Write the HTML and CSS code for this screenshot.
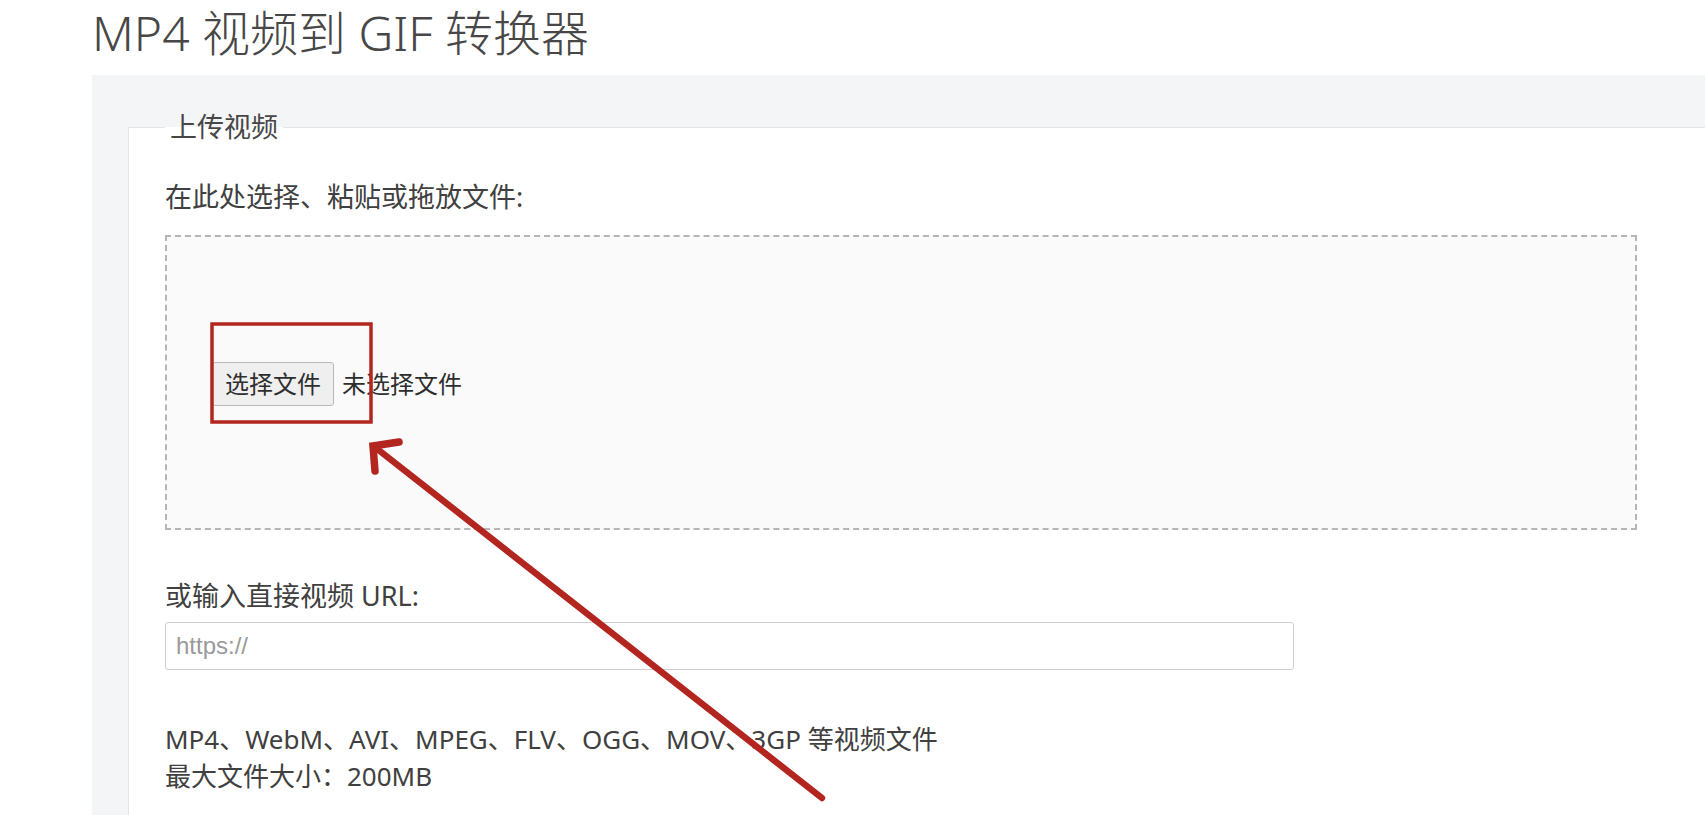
FILE: index.html
```html
<!DOCTYPE html>
<html lang="zh-CN">
<head>
<meta charset="utf-8">
<title>MP4 视频到 GIF 转换器</title>
<link rel="stylesheet" href="styles.css">
</head>
<body>
<div class="page">
  <h1 class="title">MP4 视频到 GIF 转换器</h1>
  <div class="panel">
    <fieldset class="upload">
      <legend class="upload-legend">上传视频</legend>
      <div class="field-label first">在此处选择、粘贴或拖放文件:</div>
      <div class="dropzone">
        <div class="file-input">
          <span class="file-btn">选择文件</span>
          <span class="file-name">未选择文件</span>
        </div>
      </div>
      <div class="field-label url-label">或输入直接视频 URL:</div>
      <div class="url-input"><span class="placeholder">https://</span></div>
      <div class="info">
        <div>MP4、WebM、AVI、MPEG、FLV、OGG、MOV、3GP 等视频文件</div>
        <div>最大文件大小：200MB</div>
      </div>
    </fieldset>
  </div>
</div>
<svg class="annotation" width="1705" height="815" viewBox="0 0 1705 815">
  <rect x="212" y="324" width="159" height="98" fill="none" stroke="#b3261f" stroke-width="3.5"/>
  <line x1="822" y1="798" x2="376" y2="448" stroke="#b3261f" stroke-width="6.5" stroke-linecap="round"/>
  <polyline points="399,442 373,446 375,471" fill="none" stroke="#b3261f" stroke-width="7.5" stroke-linecap="round" stroke-linejoin="miter"/>
</svg>
</body>
</html>
```

FILE: styles.css
```css
html, body {
  margin: 0;
  padding: 0;
  background: #ffffff;
  overflow: hidden;
}

body {
  width: 1705px;
  height: 815px;
  position: relative;
  font-family: "Noto Sans", "Noto Sans CJK SC", sans-serif;
  color: #404040;
}

.page {
  padding-left: 92px;
}

.title {
  margin: 0;
  font-size: 48px;
  line-height: 66px;
  font-weight: 300;
  color: #474747;
  white-space: nowrap;
}

.panel {
  margin-top: 9px;
  width: 1700px;
  background: #f4f5f6;
  padding: 33px 0 0 36px;
  height: 800px;
  box-sizing: border-box;
}

.upload {
  margin: 0;
  padding: 0 36px 60px 36px;
  border: 1px solid #e4e5e7;
  background: #ffffff;
  min-width: 0;
  height: 900px;
  box-sizing: border-box;
  font-size: 27px;
  line-height: 38px;
}

.upload-legend {
  padding: 0 5px;
  font-size: 27px;
  line-height: 38px;
  color: #474747;
}

.field-label {
  white-space: nowrap;
  color: #404040;
}

.field-label.first {
  margin-top: 32px;
  margin-bottom: 19px;
}

.dropzone {
  width: 1472px;
  height: 295px;
  box-sizing: border-box;
  border: 2px dashed #b5b5b5;
  background: #fafafa;
  display: flex;
  align-items: center;
  padding-left: 45px;
}

.file-input {
  display: flex;
  align-items: center;
  gap: 8px;
  margin-top: 2px;
}

.file-btn {
  font-size: 24px;
  line-height: 30px;
  padding: 6px 12px;
  background: #efefef;
  border: 1px solid #b8b8b8;
  border-radius: 3px;
  color: #2e2e2e;
}

.file-name {
  font-size: 24px;
  color: #2e2e2e;
}

.url-label {
  margin-top: 47px;
  margin-bottom: 7px;
}

.url-input {
  width: 1129px;
  height: 48px;
  box-sizing: border-box;
  border: 1px solid #cfcfcf;
  border-radius: 3px;
  background: #ffffff;
  display: flex;
  align-items: center;
  padding-left: 10px;
}

.placeholder {
  font-family: "Liberation Sans", Arial, sans-serif;
  font-size: 24px;
  color: #9a9a9a;
}

.info {
  margin-top: 51px;
  font-size: 26px;
  line-height: 37px;
  white-space: nowrap;
  color: #404040;
}

.annotation {
  position: absolute;
  left: 0;
  top: 0;
  pointer-events: none;
}
```
